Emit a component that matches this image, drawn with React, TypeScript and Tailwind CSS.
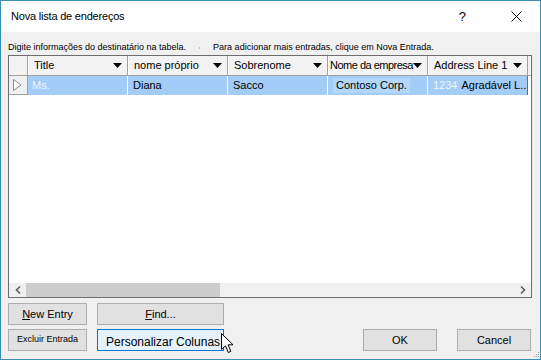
import React from "react";

const cols = [
  { title: "Title", pad: "pl-[5px]", track: "" },
  { title: "nome próprio", pad: "pl-[5px]", track: "" },
  { title: "Sobrenome", pad: "pl-[5px]", track: "" },
  { title: "Nome da empresa", pad: "pl-[1px]", track: "tracking-[-0.5px]" },
  { title: "Address Line 1", pad: "pl-[5px]", track: "" },
];

function DropArrow() {
  return (
    <svg width="9" height="5" viewBox="0 0 9 5" className="shrink-0">
      <polygon points="0,0 9,0 4.5,5" fill="#000" />
    </svg>
  );
}

function Btn({
  children,
  className = "",
  size = "text-[11px]",
}: {
  children: React.ReactNode;
  className?: string;
  size?: string;
}) {
  return (
    <div
      className={
        "h-[22px] border border-[#adadad] bg-[#e1e1e1] flex items-center justify-center text-black whitespace-nowrap " +
        size +
        " " +
        className
      }
    >
      {children}
    </div>
  );
}

export default function App() {
  return (
    <div
      className="relative w-[541px] h-[360px] border border-[#3a8fb7] bg-[#f0f0f0] flex flex-col overflow-hidden"
      style={{ fontFamily: '"Liberation Sans", Arial, sans-serif' }}
    >
      {/* title bar */}
      <div className="h-[31px] bg-white flex items-center shrink-0">
        <span className="pl-[10px] text-[11px] tracking-[-0.2px] text-black">
          Nova lista de endereços
        </span>
        <span className="ml-auto mr-[45px] text-[13px] text-black">?</span>
        <svg width="11" height="11" viewBox="0 0 11 11" className="mr-[18px]">
          <path d="M0.5 0.5 L10.5 10.5 M10.5 0.5 L0.5 10.5" stroke="#000" strokeWidth="1" />
        </svg>
      </div>

      {/* body */}
      <div className="flex-1 flex flex-col pl-[7px] pr-[8px]">
        <div className="h-[23px] flex items-end pb-[2px] text-[9px] leading-[11px] text-black">
          <span>Digite informações do destinatário na tabela.</span>
          <span className="ml-[13px] mb-[4px] w-[1px] h-[2px] bg-[#7fd3f0]" />
          <span className="ml-[13px]">
            Para adicionar mais entradas, clique em Nova Entrada.
          </span>
        </div>

        {/* grid */}
        <div className="h-[243px] w-[524px] border border-[#6d6d6d] bg-white flex flex-col">
          {/* header */}
          <div className="h-[20px] flex border-b border-[#a0a0a0] bg-[#f3f3f3] text-[11px] text-black">
            <div className="w-[19px] border-r border-[#a0a0a0]" />
            {cols.map((c) => (
              <div
                key={c.title}
                className={
                  "w-[100px] border-r border-[#a0a0a0] border-l border-l-white flex items-center pr-[5px] overflow-hidden " +
                  c.pad
                }
              >
                <span className={"flex-1 whitespace-nowrap " + c.track}>{c.title}</span>
                <DropArrow />
              </div>
            ))}
            <div className="flex-1" />
          </div>

          {/* selected row */}
          <div className="h-[19px] flex text-[11px]">
            <div className="w-[19px] bg-[#f0f0f0] border-r border-b border-[#a0a0a0] flex items-center pl-[4px]">
              <svg width="9" height="12" viewBox="0 0 9 12">
                <polygon points="0.5,0.5 8,6 0.5,11.5" fill="#fff" stroke="#8c8c8c" />
              </svg>
            </div>
            <div className="w-[100px] bg-[#a3cdf7] border-r border-white flex items-center pl-[4px] text-[#eaf4fe]">
              Ms.
            </div>
            <div className="w-[100px] bg-[#a3cdf7] border-r border-white flex items-center pl-[5px] text-black">
              Diana
            </div>
            <div className="w-[100px] bg-[#a3cdf7] border-r border-white flex items-center pl-[5px] text-black">
              Sacco
            </div>
            <div className="w-[100px] bg-[#a3cdf7] border-r border-white flex items-center pl-[5px]">
              <span className="bg-[#b3d7fb] h-[15px] flex items-center px-[3px] text-black whitespace-nowrap">
                Contoso Corp.
              </span>
            </div>
            <div className="w-[100px] bg-[#a3cdf7] border-r border-[#6d6d6d] flex items-center pl-[5px] whitespace-nowrap overflow-hidden">
              <span className="text-[#eaf4fe]">1234</span>
              <span className="ml-[4px] text-black">Agradável L...</span>
            </div>
            <div className="flex-1 bg-white" />
          </div>

          <div className="flex-1" />

          {/* horizontal scrollbar */}
          <div className="h-[14px] flex bg-[#f0f0f0]">
            <div className="w-[17px] flex items-center justify-center">
              <svg width="6" height="8" viewBox="0 0 6 8">
                <path d="M5 0.5 L1.5 4 L5 7.5" stroke="#606060" strokeWidth="1.6" fill="none" />
              </svg>
            </div>
            <div className="w-[194px] bg-[#cdcdcd]" />
            <div className="flex-1" />
            <div className="w-[17px] flex items-center justify-center">
              <svg width="6" height="8" viewBox="0 0 6 8">
                <path d="M1 0.5 L4.5 4 L1 7.5" stroke="#606060" strokeWidth="1.6" fill="none" />
              </svg>
            </div>
          </div>
        </div>

        {/* buttons */}
        <div className="mt-[5px] flex flex-col gap-[4px]">
          <div className="flex gap-[10px]">
            <Btn className="w-[79px]">
              <span>
                <span className="underline">N</span>ew Entry
              </span>
            </Btn>
            <Btn className="w-[127px]">
              <span>
                <span className="underline">F</span>ind...
              </span>
            </Btn>
          </div>
          <div className="flex gap-[10px]">
            <Btn className="w-[79px]" size="text-[9px]">
              Excluir Entrada
            </Btn>
            <div className="w-[127px] h-[22px] border border-[#0078d7] bg-[#e5f1fb] pl-[8px] pt-[5px] text-[12px] leading-[14px] text-black whitespace-nowrap overflow-hidden">
              Personalizar Colunas
            </div>
            <div className="flex-1" />
            <Btn className="w-[74px]">OK</Btn>
            <Btn className="w-[74px] ml-[10px] mr-[1px]">Cancel</Btn>
          </div>
        </div>
      </div>

      {/* mouse cursor */}
      <svg
        width="14"
        height="22"
        viewBox="0 0 14 22"
        className="absolute left-[220px] top-[332px]"
      >
        <path
          d="M0.5 0.5 L0.5 16.5 L4.5 12.8 L7.3 19.5 L9.8 18.4 L7.1 11.8 L12 11.8 Z"
          fill="#fff"
          stroke="#000"
          strokeWidth="1"
          strokeLinejoin="round"
        />
      </svg>

      {/* resize grip */}
      <svg width="8" height="8" viewBox="0 0 8 8" className="absolute right-[0px] bottom-[0px]">
        <rect x="6" y="1" width="1" height="1" fill="#a0a0a0" />
        <rect x="4" y="3" width="1" height="1" fill="#a0a0a0" />
        <rect x="6" y="3" width="1" height="1" fill="#a0a0a0" />
        <rect x="2" y="5" width="1" height="1" fill="#a0a0a0" />
        <rect x="4" y="5" width="1" height="1" fill="#a0a0a0" />
        <rect x="6" y="5" width="1" height="1" fill="#a0a0a0" />
      </svg>
    </div>
  );
}
